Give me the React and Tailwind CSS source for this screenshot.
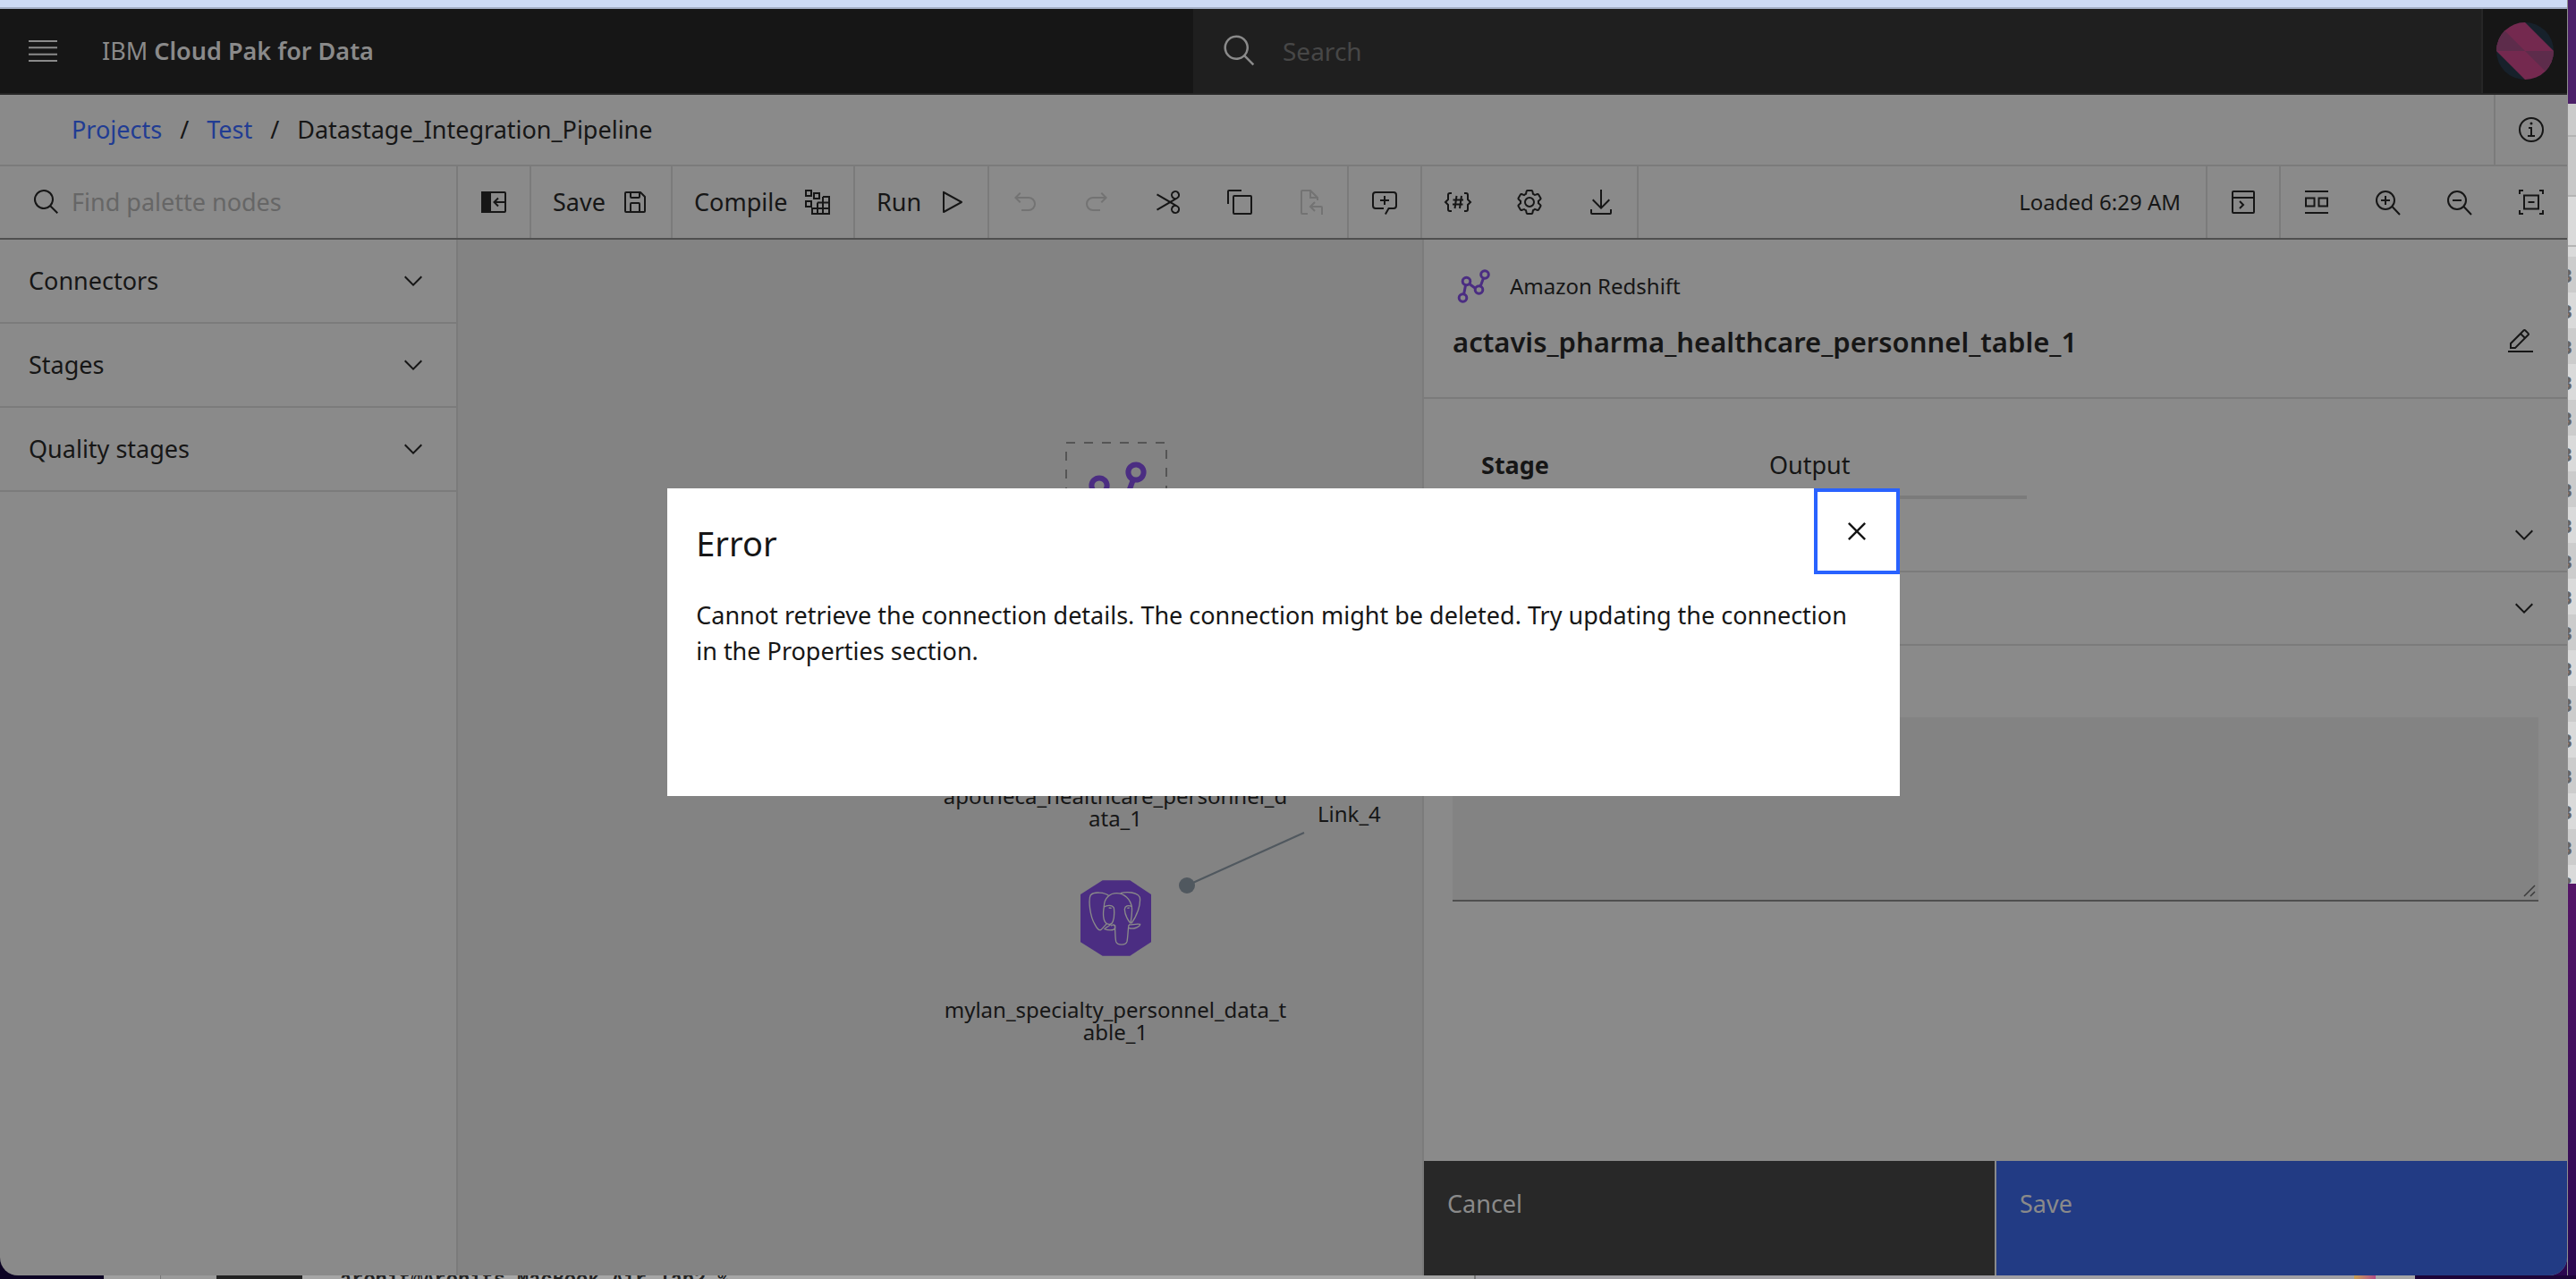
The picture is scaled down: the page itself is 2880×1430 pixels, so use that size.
const PATHS = {
  search:
    'M29 27.586l-7.552-7.552a11.018 11.018 0 1 0-1.414 1.414L27.586 29ZM4 13a9 9 0 1 1 9 9 9.01 9.01 0 0 1-9-9Z',
  save: 'M27.71 9.29l-5-5A1 1 0 0 0 22 4H6a2 2 0 0 0-2 2v20a2 2 0 0 0 2 2h20a2 2 0 0 0 2-2V10a1 1 0 0 0-.29-.71ZM12 6h8v4h-8Zm8 20h-8v-8h8Zm2 0v-8a2 2 0 0 0-2-2h-8a2 2 0 0 0-2 2v8H6V6h4v4a2 2 0 0 0 2 2h8a2 2 0 0 0 2-2V6.41l4 4V26Z',
  play: 'M7 28a1 1 0 0 1-1-1V5a1 1 0 0 1 1.482-.876l20 11a1 1 0 0 1 0 1.752l-20 11A1 1 0 0 1 7 28ZM8 6.69v18.62L24.925 16Z',
  undo: 'M20 10H7.815l3.587-3.586L10 5l-6 6 6 6 1.402-1.415L7.818 12H20a6 6 0 0 1 0 12h-8v2h8a8 8 0 0 0 0-16Z',
  redo: 'M12 10h12.185l-3.587-3.586L22 5l6 6-6 6-1.402-1.415L24.182 12H12a6 6 0 0 0 0 12h8v2h-8a8 8 0 0 1 0-16Z',
  cut: 'M26.5 19.63 20.24 16l6.26-3.63a5 5 0 0 0-1.21-9.2A5.19 5.19 0 0 0 24 3a5 5 0 0 0-4.33 7.53 5 5 0 0 0 2.39 2.1l-3.82 2.21L4 6.6 3 8.34 16.24 16 3 23.68l1 1.74 14.24-8.26 3.82 2.21a5 5 0 0 0-2.39 2.1A5 5 0 0 0 24 29a5.19 5.19 0 0 0 1.29-.17 5 5 0 0 0 1.21-9.2ZM21.4 9.53a3 3 0 0 1 1.1-4.12 3 3 0 0 1 4.1 1.11 3 3 0 0 1-1.1 4.11 3 3 0 0 1-4.1-1.1Zm5.2 15.95a3 3 0 0 1-4.1 1.11 3 3 0 0 1-1.1-4.12 3 3 0 0 1 4.1-1.1 3 3 0 0 1 1.1 4.11Z',
  copy: 'M28 10v18H10V10h18m0-2H10a2 2 0 0 0-2 2v18a2 2 0 0 0 2 2h18a2 2 0 0 0 2-2V10a2 2 0 0 0-2-2ZM4 18H2V4a2 2 0 0 1 2-2h14v2H4Z',
  comment:
    'M17.74 30 16 29l4-7h6a2 2 0 0 0 2-2V8a2 2 0 0 0-2-2H6a2 2 0 0 0-2 2v12a2 2 0 0 0 2 2h9v2H6a4 4 0 0 1-4-4V8a4 4 0 0 1 4-4h20a4 4 0 0 1 4 4v12a4 4 0 0 1-4 4h-4.84ZM17 9h-2v4h-4v2h4v4h2v-4h4v-2h-4Z',
  gear: 'M27 16.76V15.23l1.92-1.68A2 2 0 0 0 29.3 11l-2.36-4a2 2 0 0 0-1.73-1 2 2 0 0 0-.64.1l-2.43.82a11.35 11.35 0 0 0-1.31-.75l-.51-2.52a2 2 0 0 0-2-1.61h-4.68a2 2 0 0 0-2 1.61l-.51 2.52a11.48 11.48 0 0 0-1.32.75l-2.38-.86A2 2 0 0 0 6.79 6a2 2 0 0 0-1.73 1L2.7 11a2 2 0 0 0 .41 2.51L5 15.24v1.53l-1.89 1.68A2 2 0 0 0 2.7 21l2.36 4a2 2 0 0 0 1.73 1 2 2 0 0 0 .64-.1l2.43-.82a11.35 11.35 0 0 0 1.31.75l.51 2.52a2 2 0 0 0 2 1.61h4.72a2 2 0 0 0 2-1.61l.51-2.52a11.48 11.48 0 0 0 1.32-.75l2.42.82a2 2 0 0 0 .64.1 2 2 0 0 0 1.73-1l2.28-4a2 2 0 0 0-.41-2.51ZM25.21 24l-3.43-1.16a8.86 8.86 0 0 1-2.71 1.57L18.36 28h-4.72l-.71-3.55a9.36 9.36 0 0 1-2.7-1.57L6.79 24l-2.36-4 2.72-2.4a8.9 8.9 0 0 1 0-3.13L4.43 12l2.36-4 3.43 1.16a8.86 8.86 0 0 1 2.71-1.57L13.64 4h4.72l.71 3.55a9.36 9.36 0 0 1 2.7 1.57L25.21 8l2.36 4-2.72 2.4a8.9 8.9 0 0 1 0 3.13L27.57 20ZM16 22a6 6 0 1 1 6-6 5.94 5.94 0 0 1-6 6Zm0-10a3.91 3.91 0 0 0-4 4 3.91 3.91 0 0 0 4 4 3.91 3.91 0 0 0 4-4 3.91 3.91 0 0 0-4-4Z',
  download:
    'M26 24v4H6v-4H4v4a2 2 0 0 0 2 2h20a2 2 0 0 0 2-2v-4ZM26 14l-1.41-1.41L17 20.17V2h-2v18.17l-7.59-7.58L6 14l10 10 10-10Z',
  chevron: 'M16 22 6 12l1.4-1.4 8.6 8.6 8.6-8.6L26 12Z',
  close: 'M24 9.4 22.6 8 16 14.6 9.4 8 8 9.4l6.6 6.6L8 22.6 9.4 24l6.6-6.6 6.6 6.6 1.4-1.4-6.6-6.6L24 9.4Z',
  edit: 'M2 26h28v2H2zM25.4 9c.8-.8.8-2 0-2.8l-3.6-3.6c-.8-.8-2-.8-2.8 0l-15 15V24h6.4l15-15zm-5-5L24 7.600l-3 3L17.4 7l3-3zM6 22v-3.600l10-10 3.600 3.600-10 10H6z',
};

const STROKES = {
  paste: 'M12 29H6a1 1 0 0 1-1-1V4a1 1 0 0 1 1-1h9l8 8v3M15 3v8h8M28 30v-8a1 1 0 0 0-1-1H15M20 16l-5 5 5 5',
  compile:
    'M3 3h6v6H3zM12 6h6v6h-6zM3 15h6v6H3zM22 10h7v19H10v-6h19M22 10v19M16 16.500h13M16 16.500V29',
  params: 'M9 6H7a2 2 0 0 0-2 2v5l-3 3 3 3v5a2 2 0 0 0 2 2h2M23 6h2a2 2 0 0 1 2 2v5l3 3-3 3v5a2 2 0 0 1-2 2h-2M14.500 9l-2 14M20 9l-2 14M10.500 13.500h11.500M10 18.500h11.500',
  console: 'M5 4h22a1 1 0 0 1 1 1v22a1 1 0 0 1-1 1H5a1 1 0 0 1-1-1V5a1 1 0 0 1 1-1ZM4 11h24M12 15l4 4-4 4',
  columns: 'M3 4h26M3 28h26M4 11.500h9.500v9H4zM18.500 11.500H28v9h-9.500z',
  zoomIn: 'M13 4a10 10 0 1 0 0 20 10 10 0 0 0 0-20ZM20.500 21 29 30M13 9v10M8 14h10',
  zoomOut: 'M13 4a10 10 0 1 0 0 20 10 10 0 0 0 0-20ZM20.500 21 29 30M8 14h10',
  fit: 'M3 7V3h4M25 3h4v4M29 25v4h-4M7 29H3v-4M8 8.500h16v15H8zM12.500 16h7',
  info: 'M16 3a13 13 0 1 0 0 26 13 13 0 0 0 0-26ZM13 14h3v9M12 23h8',
};

function Icon({ name, className = 'size-8' }) {
  if (STROKES[name]) {
    return (
      <svg viewBox="0 0 32 32" className={className} fill="none" stroke="currentColor" strokeWidth="2" aria-hidden="true">
        <path d={STROKES[name]} />
        {name === 'info' && <circle cx="16" cy="9" r="1.500" fill="currentColor" stroke="none" />}
      </svg>
    );
  }
  return (
    <svg viewBox="0 0 32 32" className={className} fill="currentColor" aria-hidden="true">
      <path d={PATHS[name]} />
    </svg>
  );
}

function CollapseIcon() {
  return (
    <svg viewBox="0 0 32 32" className="size-8" fill="none" stroke="currentColor" strokeWidth="2" aria-hidden="true">
      <rect x="3" y="5" width="26" height="22" rx="1" />
      <path d="M3 5h9v22H3z" fill="currentColor" />
      <path d="M29 16H17M21 11.500 16.500 16l4.500 4.500" />
    </svg>
  );
}

function RedshiftIcon({ className }) {
  return (
    <svg viewBox="0 0 40 40" className={className} fill="none" stroke="#4b2d82" strokeWidth="3" aria-hidden="true">
      <path d="M8.500 29.500 10.500 19M15.500 18 21 22M27 20.500 30.500 11" />
      <circle cx="7.500" cy="33" r="4.300" />
      <circle cx="11.500" cy="14.500" r="4.300" />
      <circle cx="25.500" cy="24" r="4.300" />
      <circle cx="32" cy="7" r="4.300" />
    </svg>
  );
}

function PostgresIcon() {
  return (
    <svg viewBox="84 42 237 255" className="h-[85px] w-[79px]" fill="none" stroke="#8a8a8a" strokeWidth="4" aria-hidden="true">
      <path d="M84 90 158 43h92l71 47v160l-71 46h-92l-74-46Z" fill="#4b2d82" stroke="none" />
      <path d="M180 95C165 82 130 80 118 92c-8 15-3 70 14 98 6 12 13 22 20 19 8-6 13-14 20-21" />
      <path d="M163 132c0-32 22-46 42-46 26 0 46 20 51 46 2 18-1 38-4 55" />
      <path d="M163 132c-4 20-4 48 9 56 9 4 18 2 21-8 5-15 5-30 3-45-6-11-24-9-33-3ZM179 135l9 1" />
      <path d="M218 86c22-6 57-4 65 14 4 25-10 62-28 87" />
      <path d="M256 130c-12-5-23-2-24 10 1 20 13 40 20 47M241 136l7-1" />
      <path d="M199 194c2 20 1 40 4 54 4 14 33 14 37 0 3-14 3-38 6-56" />
      <path d="M187 190c-7 6-16 9-22 16 10 5 31 6 35-3v-8c-5-5-11-3-13 1M246 192c12 0 26-4 38-2 0 9-22 18-38 13" />
    </svg>
  );
}

function Avatar() {
  return (
    <svg viewBox="0 0 64 64" className="size-16" aria-hidden="true">
      <defs>
        <clipPath id="avatar-clip">
          <circle cx="32" cy="32" r="32" />
        </clipPath>
      </defs>
      <g clipPath="url(#avatar-clip)">
        <rect width="64" height="64" fill="#17212b" />
        <path d="M0 0h32l32 32v32H32L0 32Z" fill="#74294f" />
        <path d="M0 0v32h32ZM64 64V32H32Z" fill="#5d2c4b" />
      </g>
    </svg>
  );
}

function ToolButton({ label, icon, disabled, children }) {
  return (
    <button
      type="button"
      aria-label={label}
      disabled={disabled}
      className="flex w-20 shrink-0 items-center justify-center text-[#161616] disabled:text-[#737373]"
    >
      {children || <Icon name={icon} />}
    </button>
  );
}

function Toolbar() {
  return (
    <div className="flex h-[82px] shrink-0 border-b-2 border-[#4f4f4f] text-[27px]">
      <label className="flex w-[512px] shrink-0 items-center gap-3 border-r-2 border-[#7b7b7b] pl-9">
        <Icon name="search" />
        <input
          type="search"
          aria-label="Find palette nodes"
          placeholder="Find palette nodes"
          className="min-w-0 flex-1 bg-transparent outline-none placeholder:text-[#666666]"
        />
      </label>
      <div className="flex border-r-2 border-[#7b7b7b]">
        <ToolButton label="Collapse palette">
          <CollapseIcon />
        </ToolButton>
      </div>
      <button type="button" className="flex w-[158px] items-center justify-between border-r-2 border-[#7b7b7b] px-6">
        Save
        <Icon name="save" />
      </button>
      <button type="button" className="flex w-[204px] items-center justify-between border-r-2 border-[#7b7b7b] px-6">
        Compile
        <Icon name="compile" />
      </button>
      <button type="button" className="flex w-[150px] items-center justify-between border-r-2 border-[#7b7b7b] px-6">
        Run
        <Icon name="play" />
      </button>
      <div className="flex border-r-2 border-[#7b7b7b]">
        <ToolButton label="Undo" icon="undo" disabled />
        <ToolButton label="Redo" icon="redo" disabled />
        <ToolButton label="Cut" icon="cut" />
        <ToolButton label="Copy" icon="copy" />
        <ToolButton label="Paste" icon="paste" disabled />
      </div>
      <div className="flex border-r-2 border-[#7b7b7b]">
        <ToolButton label="Add comment" icon="comment" />
      </div>
      <div className="flex border-r-2 border-[#7b7b7b]">
        <ToolButton label="Parameters" icon="params" />
        <ToolButton label="Settings" icon="gear" />
        <ToolButton label="Download" icon="download" />
      </div>
      <p className="ml-auto self-center pr-7 text-[24px]">Loaded 6:29 AM</p>
      <div className="flex border-x-2 border-[#7b7b7b]">
        <ToolButton label="Console" icon="console" />
      </div>
      <ToolButton label="Arrange" icon="columns" />
      <ToolButton label="Zoom in" icon="zoomIn" />
      <ToolButton label="Zoom out" icon="zoomOut" />
      <ToolButton label="Zoom to fit" icon="fit" />
    </div>
  );
}

function Palette() {
  return (
    <nav className="w-[512px] shrink-0 border-r-2 border-[#7b7b7b] text-[27px]">
      {['Connectors', 'Stages', 'Quality stages'].map((name) => (
        <button
          key={name}
          type="button"
          className="flex h-[94px] w-full items-center justify-between border-b-2 border-[#7b7b7b] px-8"
        >
          {name}
          <Icon name="chevron" />
        </button>
      ))}
    </nav>
  );
}

function Canvas() {
  return (
    <section className="relative min-w-0 flex-1 overflow-hidden bg-[#838383] text-[24px] leading-[25px]">
      <svg className="absolute top-[226px] left-[679px] h-[120px] w-[114px]" fill="none" aria-hidden="true">
        <rect x="1" y="1" width="112" height="118" stroke="#555555" strokeWidth="2" strokeDasharray="10 10" />
      </svg>
      <RedshiftIcon className="absolute top-[246px] left-[694px] size-20" />
      <div className="absolute top-[609px] left-[535px] w-[400px] text-center">
        apotheca_healthcare_personnel_d
        <br />
        ata_1
      </div>
      <svg className="absolute top-[650px] left-[800px] h-[90px] w-[160px]" aria-hidden="true">
        <path d="M15 72 146 13" stroke="#50585f" strokeWidth="2" />
        <circle cx="15" cy="72" r="9" fill="#50585f" />
      </svg>
      <div className="absolute top-[629px] left-[961px]">Link_4</div>
      <div className="absolute top-[716px] left-[696px]">
        <PostgresIcon />
      </div>
      <div className="absolute top-[848px] left-[535px] w-[400px] text-center">
        mylan_specialty_personnel_data_t
        <br />
        able_1
      </div>
    </section>
  );
}

function AccordionRow({ label }) {
  return (
    <button
      type="button"
      aria-label={label}
      className="flex h-[82px] w-full shrink-0 items-center justify-end border-b-2 border-[#7b7b7b] pr-8"
    >
      <Icon name="chevron" />
    </button>
  );
}

function DetailsPanel() {
  return (
    <aside className="flex w-[1280px] shrink-0 flex-col border-l-2 border-[#7b7b7b]">
      <header className="flex h-[178px] shrink-0 flex-col border-b-2 border-[#7b7b7b] px-8 pt-8">
        <div className="flex items-center gap-5 pl-1">
          <RedshiftIcon className="size-10" />
          <p className="text-[24px] leading-10">Amazon Redshift</p>
        </div>
        <div className="flex items-center justify-between pt-4 pr-1">
          <h2 className="text-[31px] leading-[52px] font-semibold">actavis_pharma_healthcare_personnel_table_1</h2>
          <button type="button" aria-label="Edit name">
            <Icon name="edit" />
          </button>
        </div>
      </header>
      <div role="tablist" className="flex h-28 shrink-0 items-end px-8 text-[27px]">
        <button
          type="button"
          role="tab"
          aria-selected="true"
          className="h-18 w-80 border-b-4 border-[#223b8a] pl-8 text-left font-bold"
        >
          Stage
        </button>
        <button type="button" role="tab" aria-selected="false" className="ml-[2px] h-18 w-80 border-b-4 border-[#7b7b7b] pl-8 text-left">
          Output
        </button>
      </div>
      <AccordionRow label="Connection" />
      <AccordionRow label="Properties" />
      <div className="relative mx-8 mt-20 h-[206px] shrink-0">
        <textarea
          aria-label="Description"
          className="block size-full resize-none border-b-2 border-[#4f4f4f] bg-[#838383] p-4 text-[27px] outline-none"
        />
        <svg viewBox="0 0 16 16" className="absolute right-[2px] bottom-1 size-4" stroke="#3c3c3c" strokeWidth="1.500" aria-hidden="true">
          <path d="M2 14 14 2M9 14l5-5" />
        </svg>
      </div>
      <footer className="mt-auto flex h-32 shrink-0 gap-[2px] text-[27px] leading-8 text-[#8a8a8a]">
        <button type="button" className="flex flex-1 items-start bg-[#282828] px-[26px] pt-8">
          Cancel
        </button>
        <button type="button" className="flex flex-1 items-start bg-[#223b84] px-[26px] pt-8">
          Save
        </button>
      </footer>
    </aside>
  );
}

function ErrorDialog() {
  return (
    <div className="absolute inset-x-0 top-[10px] bottom-0 flex items-center justify-center">
      <div role="alertdialog" aria-labelledby="error-title" className="relative min-h-[344px] w-[48%] bg-white pr-12 pl-8">
        <h1 id="error-title" className="pt-9 text-[38px] leading-[50px]">
          Error
        </h1>
        <p className="-mr-6 pt-9 pr-6 text-[27px] leading-10">
          Cannot retrieve the connection details. The connection might be deleted. Try updating the connection in the
          Properties section.
        </p>
        <button
          type="button"
          aria-label="Close"
          className="absolute top-0 right-0 flex size-24 items-center justify-center border-4 border-[#2962ff]"
        >
          <Icon name="close" className="size-10" />
        </button>
      </div>
    </div>
  );
}

function AppWindow() {
  return (
    <main className="relative flex min-w-0 flex-1 flex-col overflow-hidden rounded-b-[20px] bg-[#8a8a8a]">
      <div className="h-[10px] shrink-0 border-b-2 border-[#a3aec4] bg-[#cddaf4]" />
      <header className="flex h-24 shrink-0 border-b-2 border-[#262626] bg-[#161616] text-[#8a8a8a]">
        <button type="button" aria-label="Menu" className="flex w-24 items-center justify-center">
          <svg viewBox="0 0 32 24" className="h-6 w-8" stroke="currentColor" strokeWidth="2" aria-hidden="true">
            <path d="M0 1h32M0 8.330h32M0 15.670h32M0 23h32" />
          </svg>
        </button>
        <p className="self-center pl-[18px] text-[27px]">
          IBM <span className="font-semibold">Cloud Pak for Data</span>
        </p>
        <label className="ml-auto flex w-[1440px] items-center bg-[#1f1f1f] pl-8">
          <Icon name="search" className="size-10" />
          <input
            type="search"
            aria-label="Search"
            placeholder="Search"
            className="ml-7 flex-1 bg-transparent text-[28px] outline-none placeholder:text-[#474747]"
          />
        </label>
        <button
          type="button"
          aria-label="Account"
          className="flex w-24 items-center justify-center border-l-2 border-[#262626]"
        >
          <Avatar />
        </button>
      </header>
      <div className="flex h-20 shrink-0 items-stretch justify-between border-b-2 border-[#7b7b7b]">
        <nav className="flex items-center gap-5 pl-20 text-[27px]">
          <a href="#projects" className="text-[#213c93]">
            Projects
          </a>
          <span>/</span>
          <a href="#test" className="text-[#213c93]">
            Test
          </a>
          <span>/</span>
          <span>Datastage_Integration_Pipeline</span>
        </nav>
        <div className="flex border-l-2 border-[#7b7b7b]">
          <ToolButton label="Information" icon="info" />
        </div>
      </div>
      <Toolbar />
      <div className="flex min-h-0 flex-1">
        <Palette />
        <Canvas />
        <DetailsPanel />
      </div>
      <ErrorDialog />
    </main>
  );
}

function BackgroundEdge() {
  return (
    <div className="flex w-[10px] shrink-0 flex-col overflow-hidden border-l border-[#8f8f8f]">
      <div className="h-[116px] shrink-0 bg-[#4c2069]" />
      <div className="h-[35px] shrink-0 bg-[#cbcbcb]" />
      <div className="h-[69px] shrink-0 border-y-2 border-[#b4b4b4] bg-[#c8c8c8]" />
      <div className="h-14 shrink-0 border-b-2 border-[#b4b4b4] bg-[#dadada]" />
      <div className="h-[11px] shrink-0 bg-[#dadada]" />
      <div className="h-[701px] shrink-0 overflow-hidden text-[22px] leading-10 font-bold text-[#666666]">
        {Array.from({ length: 18 }, (_, i) => (
          <div key={i} className="flex h-10 justify-end pr-1 odd:bg-[#cccccc] even:bg-[#dadada]">
            B
          </div>
        ))}
      </div>
      <div className="flex-1 bg-linear-to-b from-[#541467] to-[#2b0850]" />
    </div>
  );
}

function BackgroundBottom() {
  return (
    <div className="flex h-1 shrink-0 overflow-hidden">
      <div className="w-[116px] bg-[#0d0424]" />
      <div className="w-16 border-r border-[#777777] bg-[#a0a0a0]" />
      <div className="w-[62px] bg-[#9a9a9a]" />
      <div className="w-24 bg-[#222222]" />
      <div className="w-[1312px] overflow-hidden border-r-2 border-[#777777] bg-[#a6a6a6] pl-[42px] font-['Liberation_Mono',monospace] text-[22px] text-[#222222]">
        <p className="-mt-[5px] leading-[22px] font-bold">arohit@Arohits-MacBook-Air lab2 %</p>
      </div>
      <div className="flex-1 bg-[#a09fa4]" />
      <div className="w-6 bg-linear-to-r from-[#c9a04a] to-[#b04a86]" />
      <div className="w-11 bg-[#a6a6a6]" />
      <div className="w-[180px] bg-[#1c0438]" />
    </div>
  );
}

export default function App() {
  return (
    <div className="flex h-screen flex-col overflow-hidden bg-linear-to-r from-[#0d0424] to-[#2b0750] font-['Noto_Sans',sans-serif] text-[#161616]">
      <div className="flex min-h-0 flex-1">
        <AppWindow />
        <BackgroundEdge />
      </div>
      <BackgroundBottom />
    </div>
  );
}
